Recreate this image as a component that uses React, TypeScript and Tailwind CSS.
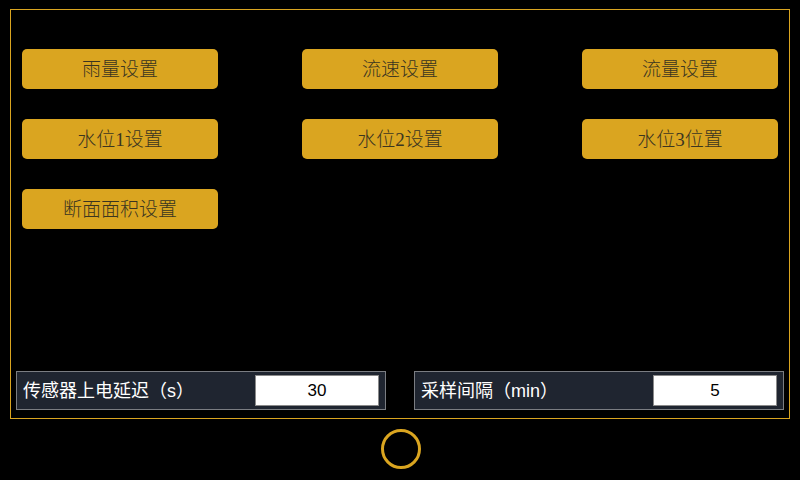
import React from "react";

const btnFont = {
  fontFamily: '"Liberation Serif", "Noto Sans CJK SC", serif',
};

function Btn({ label }: { label: string }) {
  return (
    <div
      className="w-[196px] h-[40px] rounded-[5px] bg-[#daa520] flex items-center justify-center text-[19px] font-light text-[#3a3520] leading-none"
      style={btnFont}
    >
      {label}
    </div>
  );
}

function Field({ label, value }: { label: string; value: string }) {
  return (
    <div className="w-[370px] h-[39px] border border-[#7a7d82] bg-[#1f2530] flex items-center pl-[6px] pr-[6px]">
      <span
        className="flex-1 text-[18px] text-white leading-none"
        style={{ fontFamily: '"Liberation Sans", "Noto Sans CJK SC", sans-serif' }}
      >
        {label}
      </span>
      <div
        className="w-[124px] h-[31px] bg-white border border-[#8a8a8a] flex items-center justify-center text-[17px] text-black"
        style={{ fontFamily: '"Liberation Sans", sans-serif' }}
      >
        {value}
      </div>
    </div>
  );
}

export default function App() {
  return (
    <div className="w-[800px] h-[480px] bg-black overflow-hidden relative">
      <div className="absolute left-[10px] top-[9px] w-[780px] h-[410px] border border-[#daa520] flex flex-col">
        <div className="pt-[39px] pl-[11px] grid grid-cols-[196px_196px_196px] gap-x-[84px] gap-y-[30px]">
          <Btn label="雨量设置" />
          <Btn label="流速设置" />
          <Btn label="流量设置" />
          <Btn label="水位1设置" />
          <Btn label="水位2设置" />
          <Btn label="水位3位置" />
          <Btn label="断面面积设置" />
        </div>
        <div className="mt-auto mb-[8px] pl-[5px] flex gap-[28px]">
          <Field label="传感器上电延迟（s）" value="30" />
          <Field label="采样间隔（min）" value="5" />
        </div>
      </div>
      <div className="absolute left-[381px] top-[429px] w-[40px] h-[40px] rounded-full border-[3px] border-[#daa520]" />
    </div>
  );
}
